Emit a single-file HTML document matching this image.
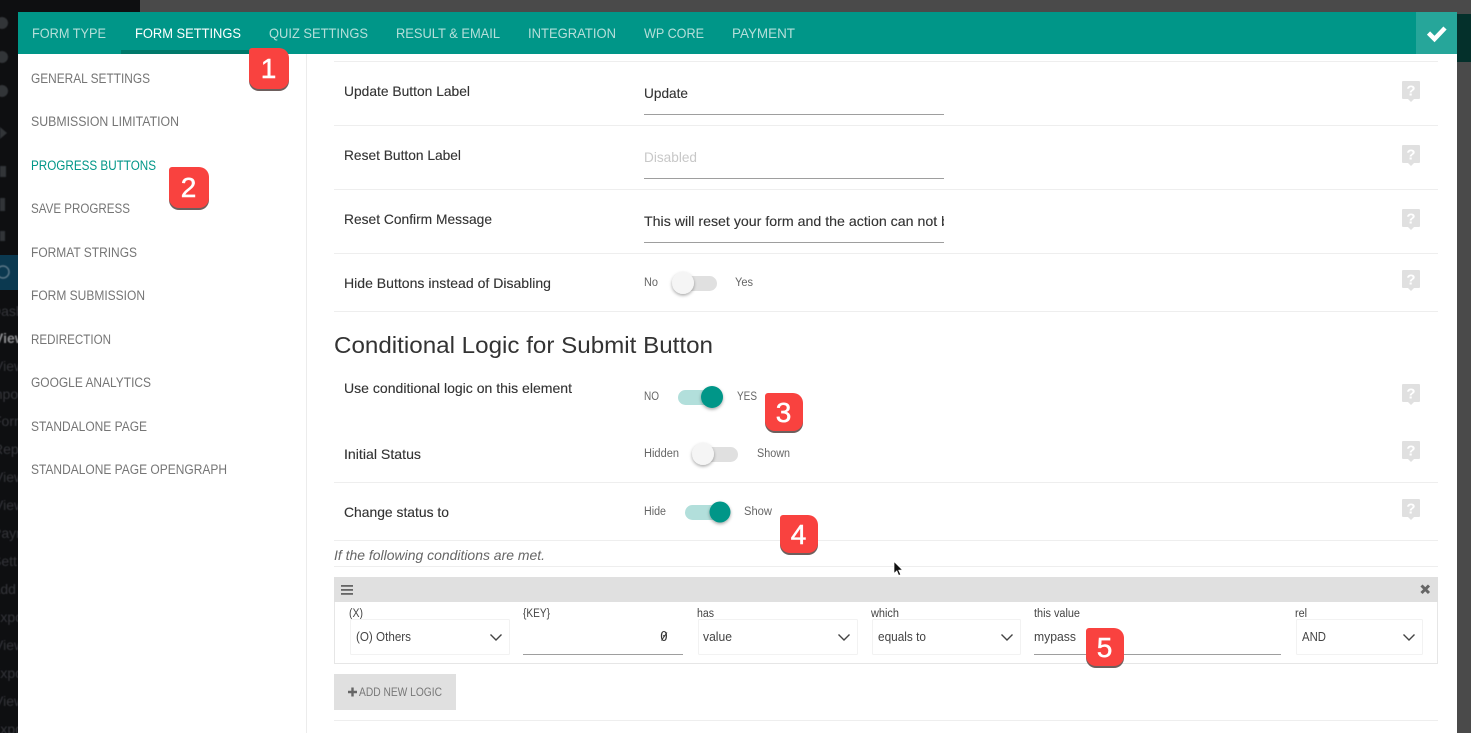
<!DOCTYPE html>
<html>
<head>
<meta charset="utf-8">
<style>
html,body{margin:0;padding:0;width:1471px;height:733px;overflow:hidden;background:#fff}
svg{display:block;font-family:"Liberation Sans",sans-serif}
.tab{font-size:14px;fill:#b5dfda}
.side{font-size:13.5px;fill:#757575}
.lab{font-size:14px;fill:#333;stroke:#333;stroke-width:.12}
.tog{font-size:11.5px;fill:#666}
.rep{font-size:11.5px;fill:#444}
.val{font-size:12.5px;fill:#444}
.bn{font-size:28px;fill:#fff;stroke:#fff;stroke-width:.5;text-anchor:middle}
.dk{font-size:14px;fill:#34363a}
</style>
</head>
<body>
<svg width="1471" height="733" viewBox="0 0 1471 733" xmlns="http://www.w3.org/2000/svg">
<defs>
<clipPath id="cl"><rect x="640" y="205" width="304" height="30"/></clipPath>
<filter id="blur" x="-20%" y="-20%" width="140%" height="140%"><feGaussianBlur stdDeviation="0.5"/></filter>
<filter id="ks" x="-50%" y="-50%" width="200%" height="200%"><feDropShadow dx="0" dy="1.5" stdDeviation="1.5" flood-color="#000" flood-opacity=".35"/></filter>
<g id="help"><path d="M-8-10h16a1 1 0 0 1 1 1v16a1 1 0 0 1-1 1h-5l-3 3-3-3h-5a1 1 0 0 1-1-1v-16a1 1 0 0 1 1-1z" fill="#e0e0e0"/><text x="0" y="4.500" text-anchor="middle" font-size="15" font-weight="700" fill="#fff">?</text></g>
<path id="chev" d="M-5.500-2.500L0 3l5.500-5.500" fill="none" stroke="#444" stroke-width="1.400"/>
<path id="b40" d="M3 0h27a10 10 0 0 1 10 10v21a10 10 0 0 1-10 10h-20a10 10 0 0 1-10-10v-28a3 3 0 0 1 3-3z"/>
<path id="b38" d="M3 0h25a10 10 0 0 1 10 10v18a10 10 0 0 1-10 10h-18a10 10 0 0 1-10-10v-25a3 3 0 0 1 3-3z"/>
</defs>

<!-- backdrop -->
<rect width="1471" height="733" fill="#4a4a4a"/>
<rect x="0" y="0" width="140" height="733" fill="#0e0f11"/>
<rect x="1457" y="14" width="14" height="48" fill="#04302b"/>
<rect x="0" y="255" width="18" height="35" fill="#0b3950"/>
<g fill="#333437" filter="url(#blur)">
<circle cx="2" cy="23" r="6"/><circle cx="2" cy="57" r="6"/><circle cx="2" cy="91" r="6"/>
<path d="M0 127l7 6-7 6z"/><rect x="0" y="166" width="6" height="11"/><rect x="0" y="198" width="5" height="13"/><rect x="0" y="231" width="5" height="10"/>
</g>
<circle cx="3" cy="272" r="6" fill="none" stroke="#5a7686" stroke-width="1.500" filter="url(#blur)"/>
<g class="dk" filter="url(#blur)">
<text class="dk" x="-9" y="316">Dash</text>
<text class="dk" x="-6" y="343" font-weight="700" style="fill:#8a8b8e">View</text>
<text class="dk" x="-6" y="371">View</text>
<text class="dk" x="-13" y="399">Impo</text>
<text class="dk" x="-7" y="426">Form</text>
<text class="dk" x="-7" y="454">Repo</text>
<text class="dk" x="-6" y="482">View</text>
<text class="dk" x="-6" y="510">View</text>
<text class="dk" x="-8" y="538">Payn</text>
<text class="dk" x="-8" y="566">Sett</text>
<text class="dk" x="-9" y="594">Add</text>
<text class="dk" x="-9" y="622">Expo</text>
<text class="dk" x="-6" y="650">View</text>
<text class="dk" x="-9" y="678">Expo</text>
<text class="dk" x="-6" y="706">View</text>
<text class="dk" x="-9" y="734">Expo</text>
</g>

<!-- modal -->
<rect x="18" y="12" width="1439" height="721" fill="#fff"/>
<rect x="18" y="12" width="1439" height="42" fill="#009688"/>
<rect x="1416" y="12" width="41" height="42" fill="#26a69a"/>
<path d="M1428.500 33l6 6 10.500-11" fill="none" stroke="#fff" stroke-width="4.500"/>
<rect x="121" y="50" width="128" height="4" fill="#00796b"/>
<text class="tab" x="32" y="38" textLength="74" lengthAdjust="spacingAndGlyphs">FORM TYPE</text>
<text class="tab" x="135" y="38" textLength="106" lengthAdjust="spacingAndGlyphs" style="fill:#fff">FORM SETTINGS</text>
<text class="tab" x="269" y="38" textLength="99" lengthAdjust="spacingAndGlyphs">QUIZ SETTINGS</text>
<text class="tab" x="396" y="38" textLength="104" lengthAdjust="spacingAndGlyphs">RESULT &amp; EMAIL</text>
<text class="tab" x="528" y="38" textLength="88" lengthAdjust="spacingAndGlyphs">INTEGRATION</text>
<text class="tab" x="644" y="38" textLength="60" lengthAdjust="spacingAndGlyphs">WP CORE</text>
<text class="tab" x="732" y="38" textLength="63" lengthAdjust="spacingAndGlyphs">PAYMENT</text>

<!-- sidebar -->
<rect x="306" y="54" width="1" height="679" fill="#ececec"/>
<text class="side" x="31" y="83" textLength="119" lengthAdjust="spacingAndGlyphs">GENERAL SETTINGS</text>
<text class="side" x="31" y="126" textLength="148" lengthAdjust="spacingAndGlyphs">SUBMISSION LIMITATION</text>
<text class="side" x="31" y="170" textLength="125" lengthAdjust="spacingAndGlyphs" style="fill:#009688">PROGRESS BUTTONS</text>
<text class="side" x="31" y="213" textLength="99" lengthAdjust="spacingAndGlyphs">SAVE PROGRESS</text>
<text class="side" x="31" y="257" textLength="106" lengthAdjust="spacingAndGlyphs">FORMAT STRINGS</text>
<text class="side" x="31" y="300" textLength="114" lengthAdjust="spacingAndGlyphs">FORM SUBMISSION</text>
<text class="side" x="31" y="344" textLength="80" lengthAdjust="spacingAndGlyphs">REDIRECTION</text>
<text class="side" x="31" y="387" textLength="120" lengthAdjust="spacingAndGlyphs">GOOGLE ANALYTICS</text>
<text class="side" x="31" y="431" textLength="116" lengthAdjust="spacingAndGlyphs">STANDALONE PAGE</text>
<text class="side" x="31" y="474" textLength="196" lengthAdjust="spacingAndGlyphs">STANDALONE PAGE OPENGRAPH</text>

<!-- row dividers -->
<g fill="#eeeeee">
<rect x="334" y="61" width="1104" height="1"/>
<rect x="334" y="125" width="1104" height="1"/>
<rect x="334" y="189" width="1104" height="1"/>
<rect x="334" y="253" width="1104" height="1"/>
<rect x="334" y="311" width="1104" height="1"/>
<rect x="334" y="482" width="1104" height="1"/>
<rect x="334" y="540" width="1104" height="1"/>
<rect x="334" y="566" width="1104" height="1"/>
<rect x="334" y="720" width="1104" height="1"/>
</g>

<!-- labels -->
<text class="lab" x="344" y="96" textLength="126" lengthAdjust="spacingAndGlyphs">Update Button Label</text>
<text class="lab" x="344" y="160" textLength="117" lengthAdjust="spacingAndGlyphs">Reset Button Label</text>
<text class="lab" x="344" y="224" textLength="148" lengthAdjust="spacingAndGlyphs">Reset Confirm Message</text>
<text class="lab" x="344" y="288" textLength="207" lengthAdjust="spacingAndGlyphs">Hide Buttons instead of Disabling</text>
<text class="lab" x="344" y="393" textLength="228" lengthAdjust="spacingAndGlyphs">Use conditional logic on this element</text>
<text class="lab" x="344" y="459" textLength="77" lengthAdjust="spacingAndGlyphs">Initial Status</text>
<text class="lab" x="344" y="517" textLength="105" lengthAdjust="spacingAndGlyphs">Change status to</text>

<!-- inputs -->
<text class="lab" x="644" y="98" textLength="44" lengthAdjust="spacingAndGlyphs">Update</text>
<rect x="644" y="114" width="300" height="1" fill="#9e9e9e"/>
<text class="lab" x="644" y="162" textLength="53" lengthAdjust="spacingAndGlyphs" style="fill:#c8c8c8;stroke:none">Disabled</text>
<rect x="644" y="178" width="300" height="1" fill="#9e9e9e"/>
<g clip-path="url(#cl)"><text class="lab" x="644" y="226" textLength="305" lengthAdjust="spacingAndGlyphs">This will reset your form and the action can not b</text></g>
<rect x="644" y="242" width="300" height="1" fill="#9e9e9e"/>

<!-- toggle: hide buttons -->
<text class="tog" x="644" y="286" textLength="14" lengthAdjust="spacingAndGlyphs">No</text>
<rect x="672" y="276" width="45" height="15" rx="7.500" fill="#e0e0e0"/>
<circle cx="683" cy="283" r="11" fill="#f5f5f5" filter="url(#ks)"/>
<text class="tog" x="735" y="286" textLength="18" lengthAdjust="spacingAndGlyphs">Yes</text>

<text x="334" y="353" font-size="23.500" fill="#333" textLength="379" lengthAdjust="spacingAndGlyphs">Conditional Logic for Submit Button</text>

<!-- toggle: conditional -->
<text class="tog" x="644" y="400" textLength="15" lengthAdjust="spacingAndGlyphs">NO</text>
<rect x="678" y="390" width="45" height="15" rx="7.500" fill="#b2dfdb"/>
<circle cx="712" cy="397" r="11" fill="#009688" filter="url(#ks)"/>
<text class="tog" x="737" y="400" textLength="20" lengthAdjust="spacingAndGlyphs">YES</text>

<!-- toggle: initial -->
<text class="tog" x="644" y="457" textLength="35" lengthAdjust="spacingAndGlyphs">Hidden</text>
<rect x="692" y="447" width="46" height="15" rx="7.500" fill="#e0e0e0"/>
<circle cx="703" cy="454" r="11" fill="#f5f5f5" filter="url(#ks)"/>
<text class="tog" x="757" y="457" textLength="33" lengthAdjust="spacingAndGlyphs">Shown</text>

<!-- toggle: change -->
<text class="tog" x="644" y="515" textLength="22" lengthAdjust="spacingAndGlyphs">Hide</text>
<rect x="685" y="505" width="45" height="15" rx="7.500" fill="#b2dfdb"/>
<circle cx="720" cy="512" r="10.500" fill="#009688" filter="url(#ks)"/>
<text class="tog" x="744" y="515" textLength="28" lengthAdjust="spacingAndGlyphs">Show</text>

<text x="334" y="560" font-size="14" font-style="italic" fill="#666" textLength="211" lengthAdjust="spacingAndGlyphs">If the following conditions are met.</text>

<!-- help icons -->
<use href="#help" x="1411" y="91"/>
<use href="#help" x="1411" y="155"/>
<use href="#help" x="1411" y="219"/>
<use href="#help" x="1411" y="280"/>
<use href="#help" x="1411" y="394"/>
<use href="#help" x="1411" y="451"/>
<use href="#help" x="1411" y="509"/>

<!-- repeater -->
<rect x="334.500" y="577.500" width="1103" height="86" fill="#fff" stroke="#e6e6e6"/>
<rect x="334" y="577" width="1104" height="25" fill="#e0e0e0"/>
<g fill="#666"><rect x="341" y="585" width="12" height="1.800"/><rect x="341" y="589" width="12" height="1.800"/><rect x="341" y="593" width="12" height="1.800"/></g>
<path d="M1421.500 585.500l7.500 7.500M1429 585.500l-7.500 7.500" stroke="#666" stroke-width="3" fill="none"/>

<text class="rep" x="349" y="617" textLength="14" lengthAdjust="spacingAndGlyphs">(X)</text>
<text class="rep" x="523" y="617" textLength="27" lengthAdjust="spacingAndGlyphs">{KEY}</text>
<text class="rep" x="697" y="617" textLength="17" lengthAdjust="spacingAndGlyphs">has</text>
<text class="rep" x="871" y="617" textLength="28" lengthAdjust="spacingAndGlyphs">which</text>
<text class="rep" x="1034" y="617" textLength="46" lengthAdjust="spacingAndGlyphs">this value</text>
<text class="rep" x="1295" y="617" textLength="12" lengthAdjust="spacingAndGlyphs">rel</text>

<g fill="#fff" stroke="#f2f2f2">
<rect x="350.500" y="619.500" width="159" height="35" rx="1"/>
<rect x="698.500" y="619.500" width="159" height="35" rx="1"/>
<rect x="872.500" y="619.500" width="148" height="35" rx="1"/>
<rect x="1296.500" y="619.500" width="126" height="35" rx="1"/>
</g>
<text class="val" x="356" y="641" textLength="55" lengthAdjust="spacingAndGlyphs">(O) Others</text>
<use href="#chev" x="496" y="637"/>
<text x="660" y="641" font-size="13" fill="#333" style="font-family:'DejaVu Sans Mono',monospace">0</text>
<path d="M661.500 640.500l5.500-8" stroke="#333" stroke-width=".9" fill="none"/>
<rect x="523" y="654" width="160" height="1" fill="#9e9e9e"/>
<text class="val" x="703" y="641" textLength="29" lengthAdjust="spacingAndGlyphs">value</text>
<use href="#chev" x="844" y="637"/>
<text class="val" x="878" y="641" textLength="48" lengthAdjust="spacingAndGlyphs">equals to</text>
<use href="#chev" x="1007" y="637"/>
<text class="val" x="1034" y="641" textLength="42" lengthAdjust="spacingAndGlyphs">mypass</text>
<rect x="1034" y="654" width="247" height="1" fill="#9e9e9e"/>
<text class="val" x="1302" y="641" textLength="24" lengthAdjust="spacingAndGlyphs">AND</text>
<use href="#chev" x="1409" y="637"/>

<!-- add button -->
<rect x="334" y="674" width="122" height="36" fill="#e0e0e0"/>
<path d="M352.500 687.500v9M348 692h9" stroke="#666" stroke-width="2.400" fill="none"/>
<text x="359" y="696" font-size="12" fill="#777" textLength="83" lengthAdjust="spacingAndGlyphs">ADD NEW LOGIC</text>

<!-- cursor -->
<path d="M894 561.500v12l2.800-2.600 1.900 4.600 2-.9-2-4.400 3.800-.2z" fill="#111" stroke="#fff" stroke-width=".7"/>

<!-- badges -->
<g>
<use href="#b40" x="249" y="50" fill="#6d5f5d"/>
<use href="#b40" x="249" y="48" fill="#f9423f"/>
<text class="bn" x="268.500" y="78">1</text>
<use href="#b40" x="169" y="169" fill="#6d5f5d"/>
<use href="#b40" x="169" y="167" fill="#f9423f"/>
<text class="bn" x="188.500" y="197">2</text>
<use href="#b38" x="765" y="395" fill="#6d5f5d"/>
<use href="#b38" x="765" y="393" fill="#f9423f"/>
<text class="bn" x="783.500" y="422">3</text>
<use href="#b38" x="780" y="517" fill="#6d5f5d"/>
<use href="#b38" x="780" y="515" fill="#f9423f"/>
<text class="bn" x="798.500" y="544">4</text>
<use href="#b38" x="1086" y="630" fill="#6d5f5d"/>
<use href="#b38" x="1086" y="628" fill="#f9423f"/>
<text class="bn" x="1104.500" y="657">5</text>
</g>
</svg>
</body>
</html>
